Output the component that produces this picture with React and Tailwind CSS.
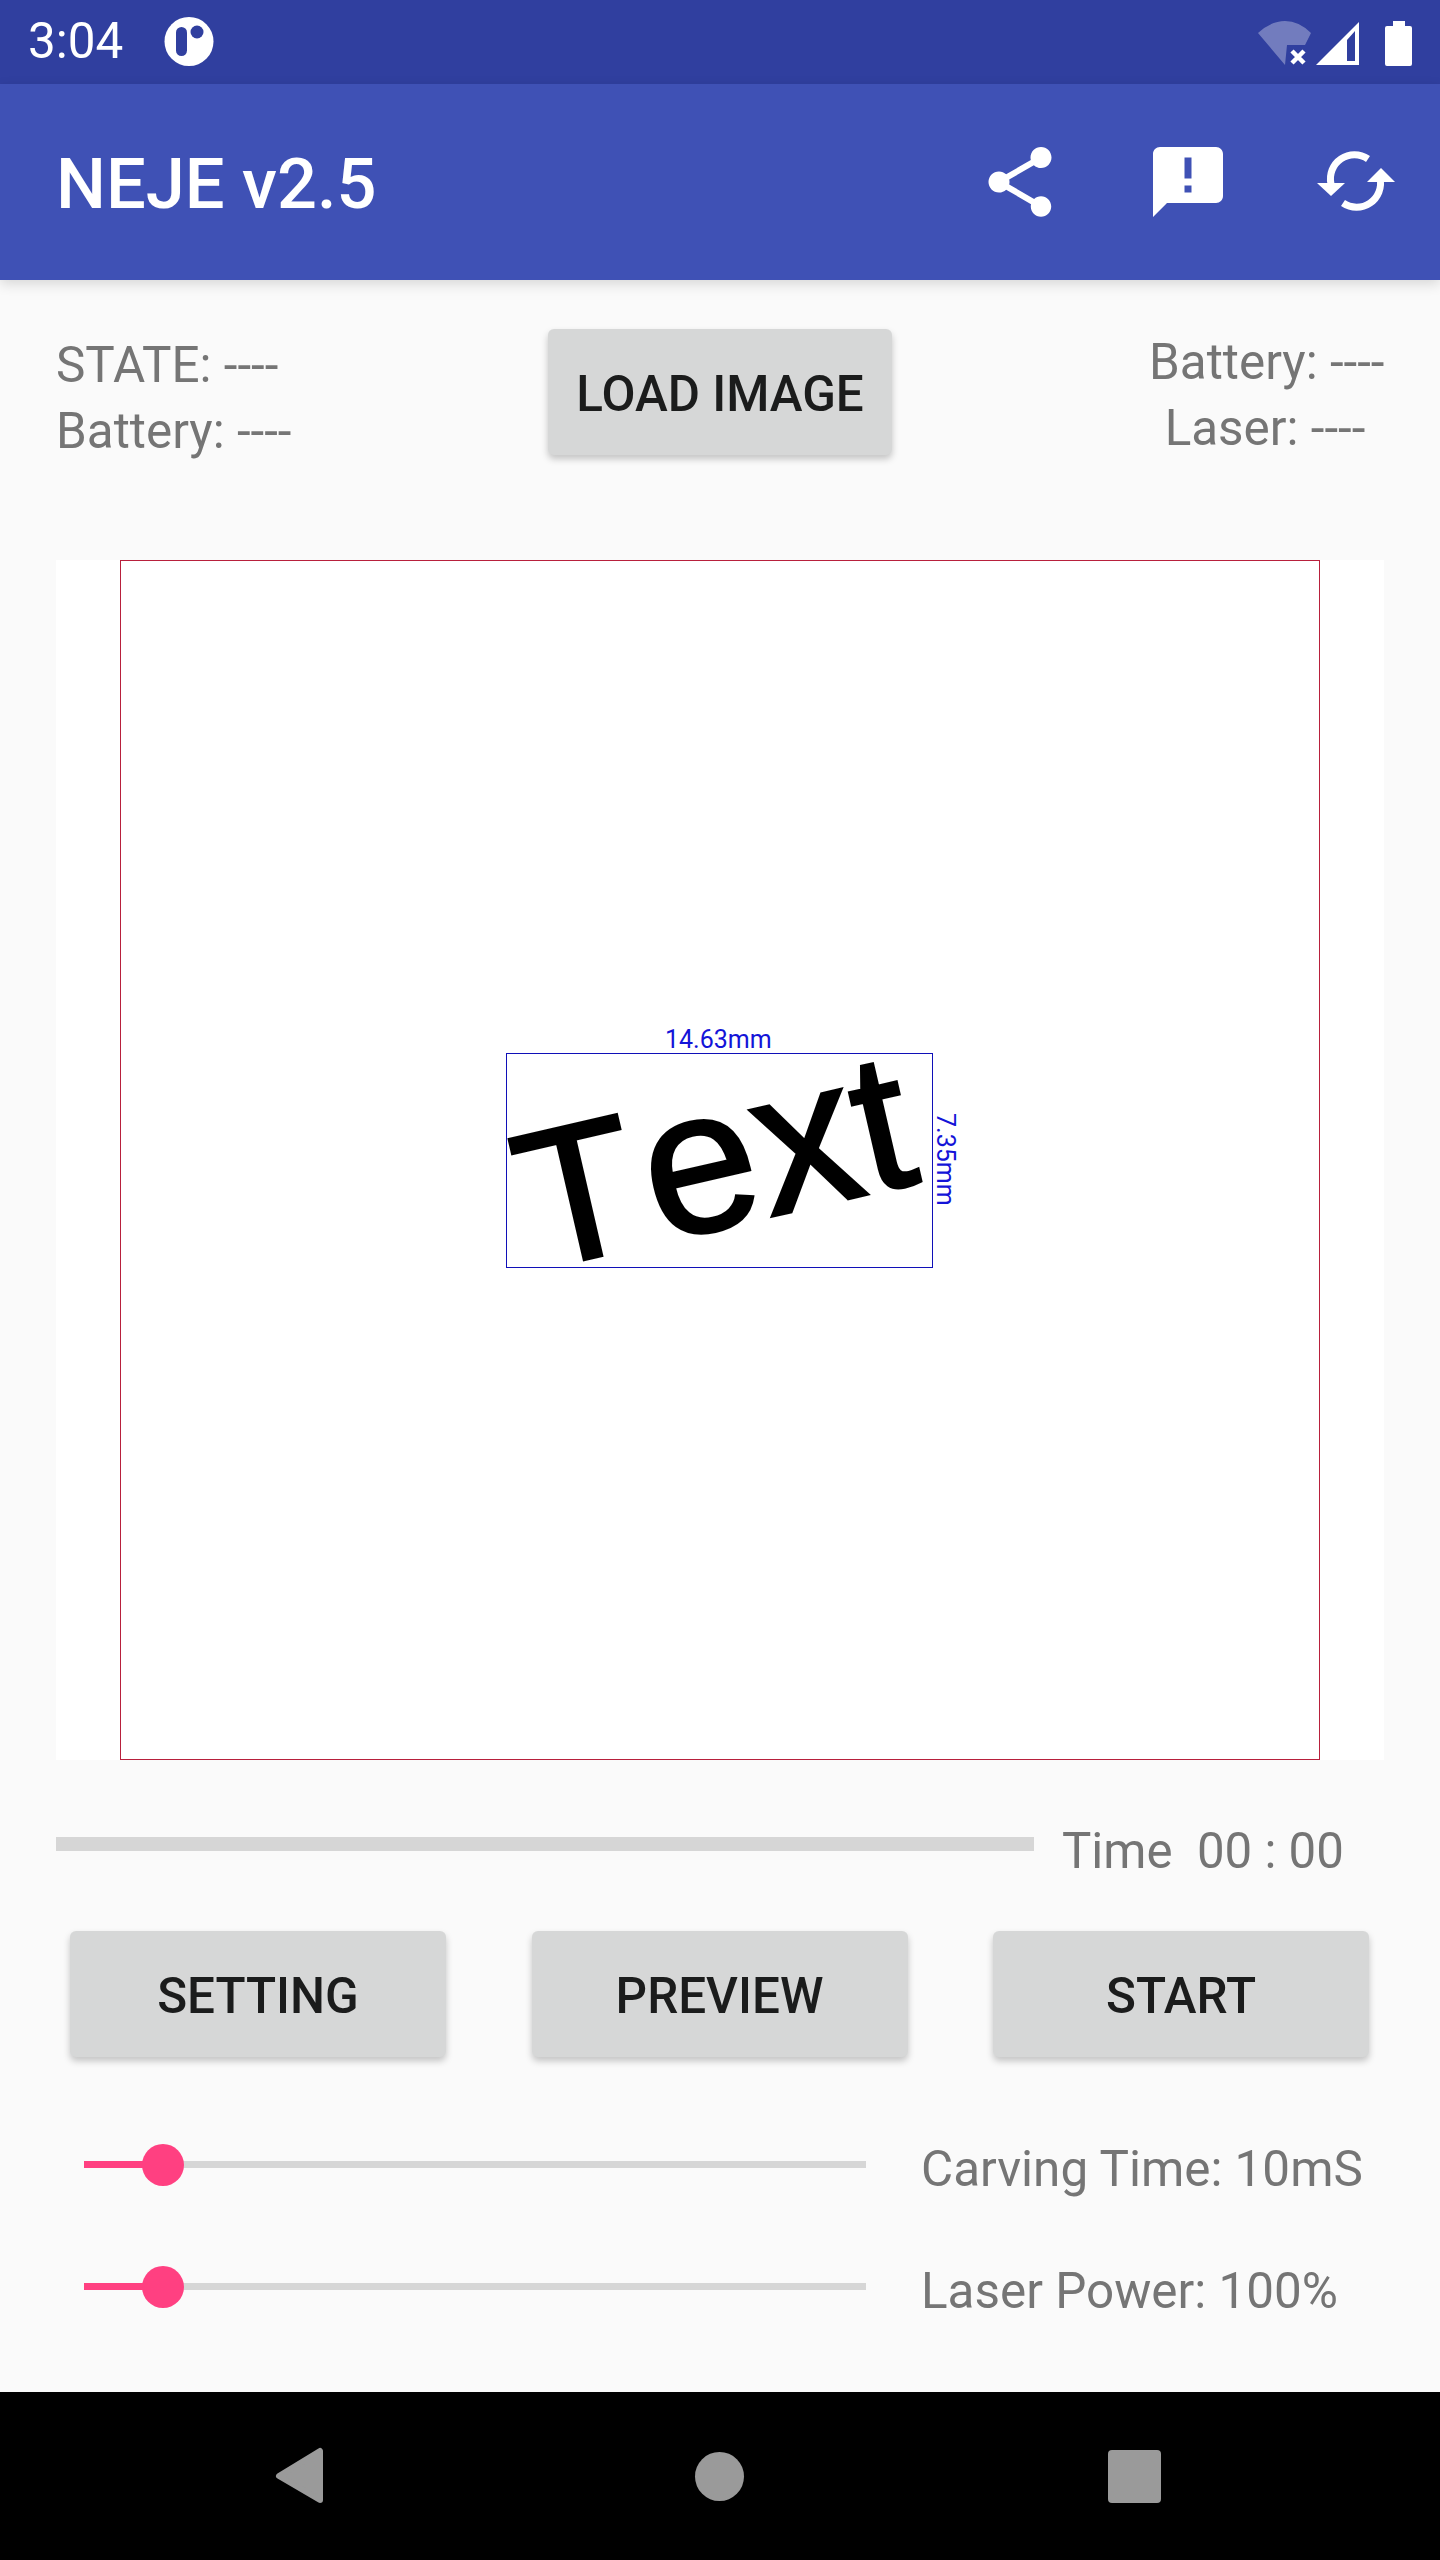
function Btn({ children, w = "w-[376px]", pad = "pt-[3px]" }) {
  return (
    <div className={`${w} h-[126px] ${pad} shrink-0 rounded-[6px] bg-[#d6d7d7] shadow-[0_4px_7px_rgba(0,0,0,0.22)] flex items-center justify-center text-[49.4px] font-medium text-[#1b1c1c]`}>
      {children}
    </div>
  );
}

function Slider() {
  return (
    <div className="relative w-[782px] h-[42px] mt-2 ml-[84px] shrink-0">
      <div className="absolute left-0 right-0 top-[17px] h-[7px] bg-[#d6d6d6]" />
      <div className="absolute left-0 w-[70px] top-[17px] h-[7px] bg-[#ff4081]" />
      <div className="absolute left-[58px] top-0 w-[42px] h-[42px] rounded-full bg-[#ff4081]" />
    </div>
  );
}

function SliderRow({ label, className = "" }) {
  return (
    <div className={`flex items-start ${className}`}>
      <Slider />
      <span className="ml-[55px] text-[49.4px] leading-[66px] text-[#757575] whitespace-nowrap">{label}</span>
    </div>
  );
}

export default function App() {
  return (
    <div className="w-[1440px] h-[2560px] flex flex-col bg-[#fafafa] overflow-hidden font-['Roboto',sans-serif]">
      {/* status bar */}
      <div className="h-[84px] shrink-0 bg-[#303f9f] flex items-center relative">
        <span className="ml-[28px] text-[49.4px] font-normal text-white leading-none">3:04</span>
        <svg className="ml-[41px]" width="50" height="50" viewBox="163 18 50 50">
          <circle cx="188" cy="42.5" r="24.5" fill="#fff" />
          <rect x="175" y="28" width="11" height="29" rx="5.5" fill="#303f9f" />
          <circle cx="196" cy="33" r="6.5" fill="#303f9f" />
        </svg>
        <svg className="ml-auto mr-[20px]" width="170" height="60" viewBox="1250 10 170 60">
          <path d="M1285 63 L1258 31 Q1271 19 1285 19 Q1299 19 1311 31 L1305 43 L1287 43 Z" fill="#fff" fillOpacity="0.32" />
          <path d="M1292 49 L1304 61 M1304 49 L1292 61" stroke="#fff" strokeWidth="4.5" />
          <path fillRule="evenodd" d="M1316 63 L1359 20 L1359 63 Z M1347 38 L1347 59 L1355 59 L1355 29 Z" fill="#fff" />
          <path d="M1393 19 H1405 V24 H1410 Q1412 24 1412 26 V62 Q1412 64 1410 64 H1387 Q1385 64 1385 62 V26 Q1385 24 1387 24 H1393 Z" fill="#fff" />
        </svg>
      </div>

      {/* app bar */}
      <div className="h-[196px] shrink-0 bg-[#3f51b5] flex items-center pl-[56px] shadow-[0_4px_12px_rgba(0,0,0,0.14)] relative">
        <span className="text-[70.4px] pt-[5px] font-medium text-white leading-none">NEJE v2.5</span>
        <div className="flex-1" />
        <svg width="84" height="84" viewBox="0 0 24 24" fill="#fff">
          <path d="M18 16.08c-.76 0-1.44.3-1.96.77L8.91 12.7c.05-.23.09-.46.09-.7s-.04-.47-.09-.7l7.05-4.11c.54.5 1.25.81 2.04.81 1.66 0 3-1.34 3-3s-1.34-3-3-3-3 1.34-3 3c0 .24.04.47.09.7L8.04 9.81C7.5 9.31 6.79 9 6 9c-1.66 0-3 1.34-3 3s1.34 3 3 3c.79 0 1.5-.31 2.04-.81l7.12 4.16c-.05.21-.08.43-.08.65 0 1.61 1.31 2.92 2.92 2.92 1.61 0 2.92-1.31 2.92-2.92s-1.31-2.92-2.92-2.92z" />
        </svg>
        <svg className="ml-[84px]" width="84" height="84" viewBox="0 0 24 24" fill="#fff">
          <path d="M20 2H4c-1.1 0-2 .9-2 2v18l4-4h14c1.1 0 2-.9 2-2V4c0-1.1-.9-2-2-2zm-7 9h-2V5h2v6zm0 4h-2v-2h2v2z" />
        </svg>
        <svg className="ml-[80px] mr-[40px]" width="90" height="84" viewBox="1310 140 90 84" fill="none">
          <path d="M1368 159 A24 24 0 0 0 1331 184" stroke="#fff" strokeWidth="7" />
          <path d="M1343 203 A24 24 0 0 0 1380 178" stroke="#fff" strokeWidth="7" />
          <path d="M1317 183 H1345 L1331 196 Z" fill="#fff" />
          <path d="M1367 182 H1395 L1381 168 Z" fill="#fff" />
        </svg>
      </div>

      {/* main */}
      <div className="flex-1 flex flex-col">
        <div className="flex items-start justify-between px-[56px] pt-[49px] text-[49.4px] leading-[66px] text-[#757575]">
          <div className="w-[235px] whitespace-nowrap">
            <div className="mt-[3px]">STATE: ----</div>
            <div>Battery: ----</div>
          </div>
          <Btn w="w-[344px]">LOAD IMAGE</Btn>
          <div className="w-[235px] pr-[3px] whitespace-nowrap text-center">
            <div>Battery: ----</div>
            <div>Laser: ----</div>
          </div>
        </div>

        {/* canvas */}
        <div className="relative mx-[56px] mt-[96px] w-[1328px] h-[1200px] shrink-0 bg-white">
          <div className="absolute left-[64px] top-0 w-[1200px] h-[1200px] border border-[#b8203c]" />
          <div className="absolute left-[450px] top-[493px] w-[427px] h-[215px] border border-[#1010b8]" />
          <svg className="absolute left-[450px] top-[493px] overflow-visible" width="426" height="214" viewBox="506 1053 426 214">
            <text transform="translate(535 1271) rotate(-13)" fontFamily="'Liberation Sans', sans-serif" fontSize="195" fill="#000" stroke="#000" strokeWidth="3">
              T<tspan fontSize="205" dx="8">ex</tspan><tspan fontSize="195" dx="0">t</tspan>
            </text>
          </svg>
          <span className="absolute left-[609px] top-[465px] text-[25px] leading-[30px] text-[#1414d8] whitespace-nowrap">14.63mm</span>
          <span className="absolute left-[843px] top-[584px] w-[92px] text-[25px] leading-[30px] text-[#1414d8] whitespace-nowrap rotate-90 origin-center">7.35mm</span>
        </div>

        {/* progress */}
        <div className="flex items-start pl-[56px] mt-[57px]">
          <div className="w-[978px] h-[14px] mt-5 bg-[#d6d6d6] shrink-0" />
          <span className="ml-[28px] pt-[1px] text-[49.2px] leading-[66px] text-[#757575] whitespace-pre">{"Time  00 : 00"}</span>
        </div>

        {/* buttons */}
        <div className="flex justify-between pl-[70px] pr-[71px] mt-[47px]">
          <Btn pad="pt-[5px]">SETTING</Btn>
          <Btn pad="pt-[5px]">PREVIEW</Btn>
          <Btn pad="pt-[5px]">START</Btn>
        </div>

        <SliderRow label="Carving Time: 10mS" className="mt-[79px]" />
        <SliderRow label="Laser Power: 100%" className="mt-[56px]" />
      </div>

      {/* nav */}
      <div className="h-[168px] shrink-0 bg-black flex items-center relative">
        <svg className="ml-[270px]" width="60" height="68" viewBox="270 2442 60 68">
          <path d="M279 2476 L320 2451 L320 2500 Z" fill="#9a9a9a" stroke="#9a9a9a" strokeWidth="6" strokeLinejoin="round" />
        </svg>
        <div className="ml-[365px] w-[49px] h-[49px] rounded-full bg-[#9a9a9a]" />
        <div className="ml-[364px] w-[53px] h-[53px] rounded-[4px] bg-[#9a9a9a]" />
      </div>
    </div>
  );
}
